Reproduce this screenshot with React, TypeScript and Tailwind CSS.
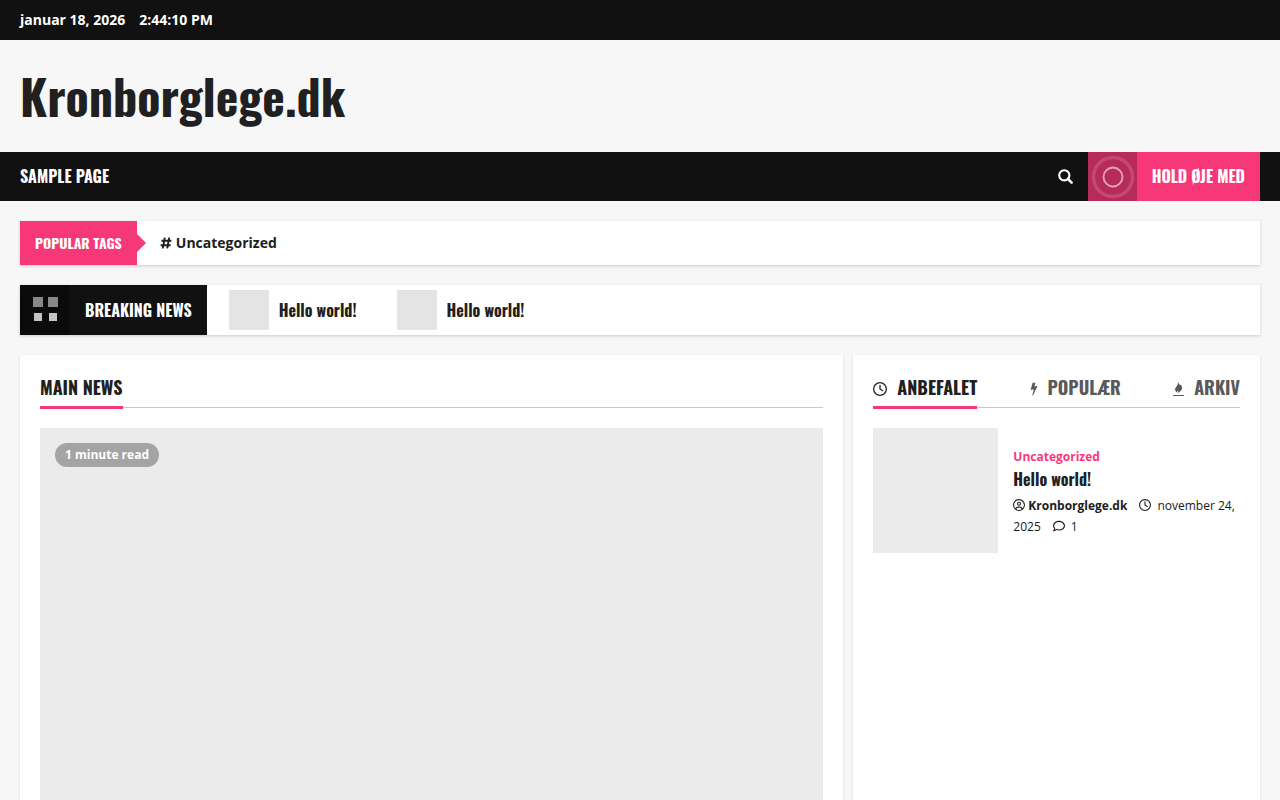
import React, { useState } from "react";
import clsx from "clsx";
import { FaRegCircleUser, FaRegClock, FaRegComment } from "react-icons/fa6";

const heading = "font-['Oswald','Liberation_Sans_Narrow',sans-serif] font-bold";

function SearchIcon() {
  return (
    <svg viewBox="0 0 15 15" className="size-[15px]" fill="none" stroke="currentColor">
      <circle cx="6.3" cy="6.3" r="5.1" strokeWidth="2.1" />
      <path d="M10 10L13.6 13.6" strokeWidth="2.6" strokeLinecap="round" />
    </svg>
  );
}

function HashIcon() {
  return (
    <svg viewBox="0 0 12 12" className="size-3" fill="none" stroke="currentColor">
      <path d="M4.8 0.6L2.8 11.4M9.2 0.6L7.2 11.4M1.4 3.7H11.4M0.6 8.2H10.6" strokeWidth="1.9" />
    </svg>
  );
}

function BoltIcon() {
  return (
    <svg viewBox="0 0 8 14" className="h-3.5 w-2" fill="currentColor">
      <path d="M2.6 0.8H5.4L4.3 4.4L7.6 3.7L3 13.6H2.3L3.8 7.2L0.6 8Z" />
    </svg>
  );
}

function FireIcon() {
  return (
    <svg viewBox="0 0 11 14" className="h-3.5 w-[11px]" fill="currentColor">
      <path d="M5.6 0C5.4 1.4 6 2.1 6.9 2.9C7.1 3.2 7.4 2.8 7.6 2.6C8.6 3.8 9.4 5.2 9 6.8C8.6 8.6 6.8 9.6 5.2 11.2C5.3 9.9 5.2 9.3 4.6 8.6C4.4 9.2 4.2 9.8 4.2 10.6C2.9 9.8 1.9 8.4 2.1 6.9C2.4 5 4 4.2 4.6 2.4C4.8 1.5 5 0.7 5.6 0Z" />
      <path d="M0 13H11V14H0Z" />
    </svg>
  );
}

const tabs = [
  { name: "Anbefalet", icon: <FaRegClock className="size-3.5" /> },
  { name: "Populær", icon: <BoltIcon /> },
  { name: "Arkiv", icon: <FireIcon /> },
];

function Header() {
  return (
    <header>
      <div className="flex h-10 items-center gap-3.5 bg-[#111] px-5 text-sm font-bold text-white">
        <span>januar 18, 2026</span>
        <span>2:44:10 PM</span>
      </div>
      <div className="flex h-28 items-start px-5 pt-8">
        <h1 className={clsx(heading, "text-5xl leading-none")}>
          <a href="#">Kronborglege.dk</a>
        </h1>
      </div>
      <nav
        className={clsx(
          heading,
          "flex h-[49px] items-center justify-between bg-[#111] px-5 text-base leading-[23px] uppercase text-white",
        )}
      >
        <a href="#">Sample Page</a>
        <div className="flex h-full items-center">
          <button aria-label="Search" className="px-[15px]">
            <SearchIcon />
          </button>
          <a href="#" className="flex h-full items-center bg-[#f73878]">
            <span className="flex h-full w-[49px] items-center justify-center bg-[#b72b5b]">
              <svg viewBox="0 0 49 49" className="size-[49px]" fill="none">
                <circle cx="25" cy="25" r="19.5" stroke="#c44873" strokeWidth="3.5" />
                <circle cx="25" cy="25" r="9.5" stroke="#e7a5bb" strokeWidth="1.8" />
              </svg>
            </span>
            <span className="px-[15px]">Hold øje med</span>
          </a>
        </div>
      </nav>
    </header>
  );
}

function PopularTags() {
  return (
    <section className="flex h-11 items-center bg-white shadow-[0_1px_3px_rgba(0,0,0,0.18)]">
      <h2
        className={clsx(
          heading,
          "flex h-full items-center bg-[#f73878] px-[15px] text-sm uppercase text-white",
        )}
      >
        Popular Tags
      </h2>
      <svg viewBox="0 0 9 18" className="h-[18px] w-[9px]" fill="#f73878">
        <path d="M0 0L9 9L0 18Z" />
      </svg>
      <a href="#" className="ml-3.5 flex items-center gap-1 text-sm font-bold">
        <HashIcon />
        Uncategorized
      </a>
    </section>
  );
}

function BreakingNews() {
  return (
    <section className="flex h-[50px] items-center bg-white shadow-[0_1px_3px_rgba(0,0,0,0.18)]">
      <div className="flex h-full items-center bg-[#111] text-white">
        <span className="flex h-full w-[50px] items-center justify-center bg-[#0b0b0b]">
          <svg viewBox="0 0 50 50" className="size-[50px]">
            <path d="M13 12h10v10H13zM28 12h10v10H28z" fill="#888" />
            <path d="M14 28h8v8H14zM29 28h8v8H29z" fill="#c4c4c4" />
          </svg>
        </span>
        <h2 className={clsx(heading, "px-[15px] text-base uppercase")}>
          Breaking News
        </h2>
      </div>
      <div className="flex gap-10 pl-[22px]">
        {["Hello world!", "Hello world!"].map((title, i) => (
          <a href="#" key={i} className="flex items-center gap-2.5">
            <span className="size-10 bg-[#e4e4e4]" />
            <span className={clsx(heading, "text-base")}>{title}</span>
          </a>
        ))}
      </div>
    </section>
  );
}

function MainNews() {
  return (
    <section className="bg-white p-5 shadow-[0_1px_3px_rgba(0,0,0,0.1)]">
      <div className="flex h-[33px] items-start border-b border-[#c8c8c8]">
        <h2
          className={clsx(
            heading,
            "h-[34px] border-b-3 border-[#f73878] text-lg leading-6 uppercase",
          )}
        >
          Main News
        </h2>
      </div>
      <a
        href="#"
        className="mt-5 flex h-[480px] items-start bg-[#ebebeb] p-[15px]"
      >
        <span className="rounded-full bg-[#a4a4a4] px-2.5 text-xs leading-6 font-bold text-white">
          1 minute read
        </span>
      </a>
    </section>
  );
}

function Sidebar() {
  const [active, setActive] = useState(0);

  return (
    <aside className="h-full bg-white p-5 shadow-[0_1px_3px_rgba(0,0,0,0.1)]">
      <div
        role="tablist"
        className="flex h-[33px] items-start justify-between border-b border-[#c8c8c8]"
      >
        {tabs.map((tab, i) => (
          <button
            key={tab.name}
            role="tab"
            aria-selected={i === active}
            onClick={() => setActive(i)}
            className={clsx(
              heading,
              "flex h-[34px] items-start gap-2.5 border-b-3 text-lg leading-6 uppercase",
              i === active
                ? "border-[#f73878] text-[#202020]"
                : "border-transparent text-[#5a5a5a]",
            )}
          >
            <span className="flex h-7 items-center">{tab.icon}</span>
            {tab.name}
          </button>
        ))}
      </div>
      <article className="mt-5 flex gap-[15px]">
        <a
          href="#"
          aria-label="Hello world!"
          className="size-[125px] shrink-0 bg-[#ebebeb]"
        />
        <div className="pt-[19px] text-xs">
          <a href="#" className="block leading-5 font-bold text-[#f73878]">
            Uncategorized
          </a>
          <h3 className={clsx(heading, "text-base leading-6")}>
            <a href="#">Hello world!</a>
          </h3>
          <p className="mt-1 leading-[21px]">
            <a href="#" className="font-bold">
              <FaRegCircleUser className="mr-[3px] inline size-3 align-[-1px]" />
              Kronborglege.dk
            </a>
            <FaRegClock className="mr-1.5 ml-3 inline size-3 align-[-1px]" />
            november 24, 2025
            <FaRegComment className="mr-1.5 ml-3 inline size-3 align-[-1px]" />
            <a href="#">1</a>
          </p>
        </div>
      </article>
    </aside>
  );
}

function App() {
  return (
    <div className="min-h-screen bg-[#f7f7f7] font-['Open_Sans','Noto_Sans',sans-serif] text-[#202020]">
      <Header />
      <main className="flex flex-col gap-5 p-5">
        <PopularTags />
        <BreakingNews />
        <div className="-mx-[5px] flex">
          <div className="w-2/3 px-[5px]">
            <MainNews />
          </div>
          <div className="w-1/3 px-[5px]">
            <Sidebar />
          </div>
        </div>
      </main>
    </div>
  );
}

export default App;
